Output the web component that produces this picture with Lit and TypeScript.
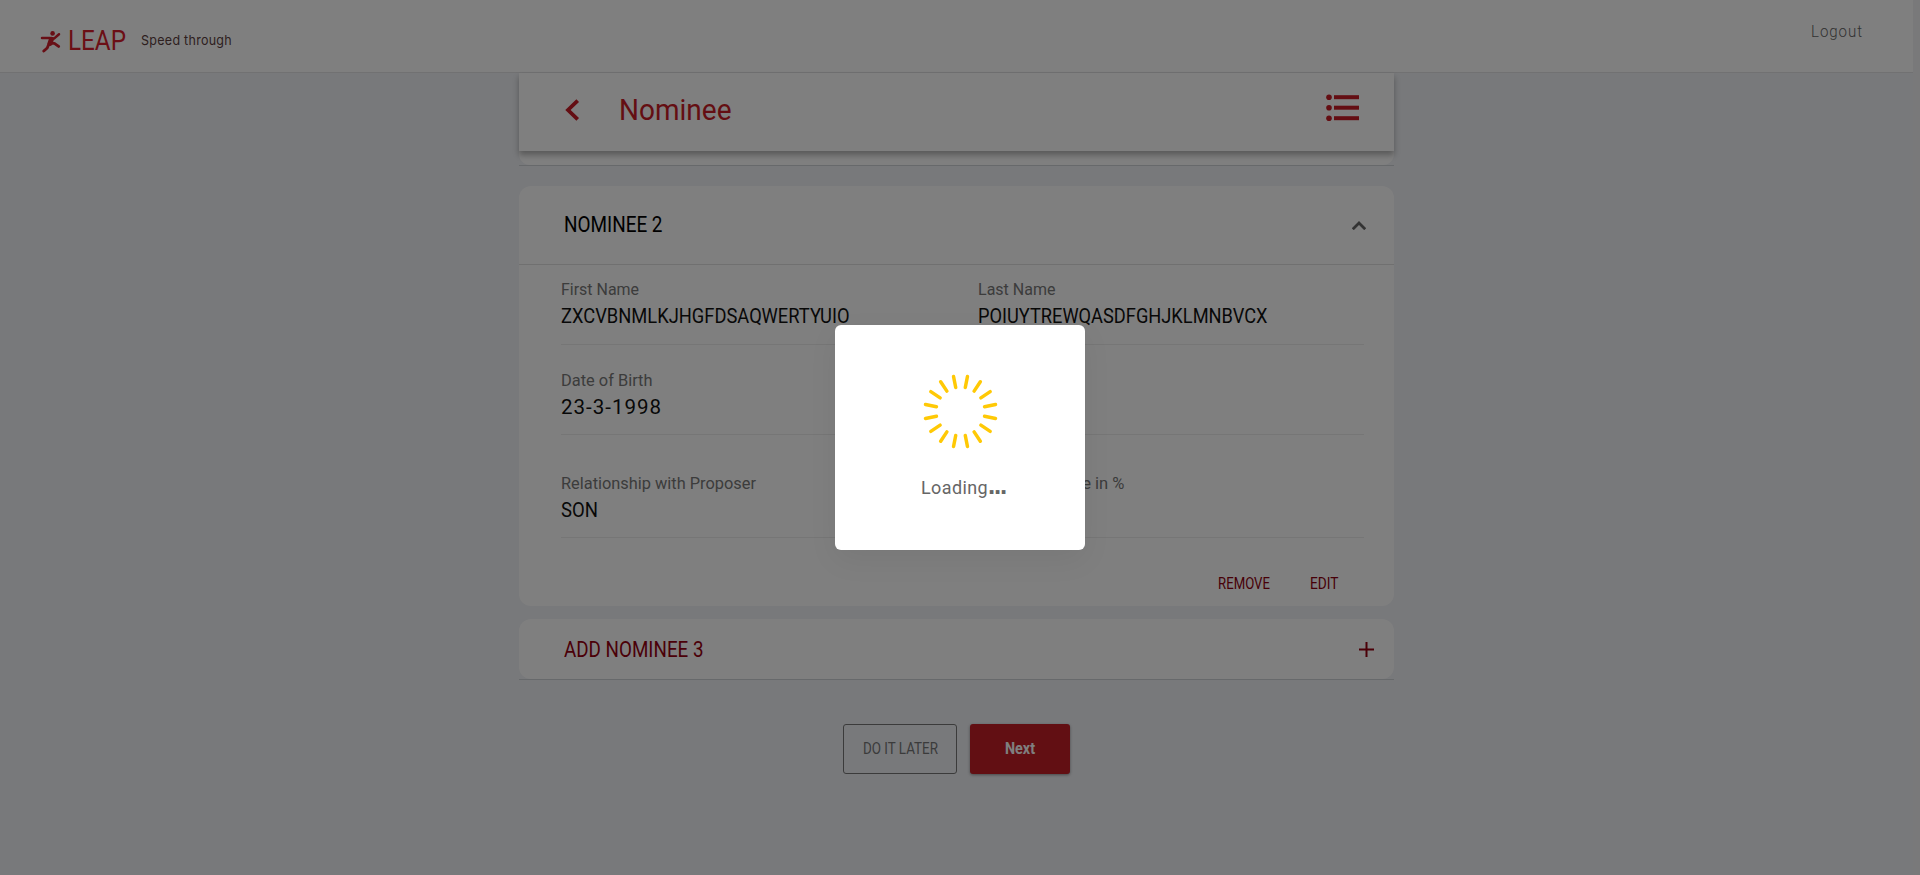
import { LitElement, html, css, svg } from "lit";
import { customElement, property } from "lit/decorators.js";

/** A line of text condensed or widened to a set width. */
@customElement("fit-text")
class FitText extends LitElement {
  @property() text = "";
  @property({ type: Number }) width = 0;

  static styles = css`
    :host { display: block; white-space: pre; text-align: left; flex: none; }
    .box { display: block; overflow: visible; }
    .ink { display: inline-block; transform-origin: 0 50%; }
  `;

  updated() {
    const ink = this.renderRoot.querySelector(".ink") as HTMLElement;
    ink.style.transform = "none";
    const natural = ink.getBoundingClientRect().width;
    if (natural) ink.style.transform = `scaleX(${this.width / natural})`;
  }

  render() {
    return html`<span class="box" style="width:${this.width}px"><span class="ink">${this.text}</span></span>`;
  }
}

const fit = (text: string, width: number, cls = "") =>
  html`<fit-text class=${cls} .text=${text} .width=${width}></fit-text>`;

@customElement("app-root")
class AppRoot extends LitElement {
  static styles = css`
    :host {
      display: block;
      height: 875px;
      overflow: hidden;
      position: relative;
      background: #f4f4f4;
      font-family: Roboto, "Liberation Sans", sans-serif;
      color: #000;
    }
    * { box-sizing: border-box; }
    svg { display: block; flex: none; }
    .page { width: 1920px; padding-right: 7px; height: 875px; background: linear-gradient(90deg, #f0f2f6 1913px, #f2f3f5 1913px); }
    .topbar {
      height: 73px; background: #fff; border-bottom: 1px solid #e2e2e4;
      display: flex; justify-content: space-between; padding: 0 50px 0 40px;
    }
    .brand { display: flex; align-items: center; height: 81px; }
    .leap { font-size: 28.5px; line-height: 34px; color: #d81f2c; margin: 0 15px 0 6.5px; }
    .tag { font: 13.6px/20px Inter, sans-serif; letter-spacing: .3px; color: #5c3f3f; margin-bottom: 2px; }
    .logout { font: 300 15.8px/20px Roboto, sans-serif; letter-spacing: 1px; color: #666; margin-top: 22px; }
    .column { width: 875px; margin: 0 auto; }
    .title {
      height: 78px; background: #fff; padding: 0 35px 6px 46px; position: relative; z-index: 1;
      display: flex; align-items: center;
      box-shadow: 0 4px 6px rgba(0, 0, 0, .3);
    }
    .back { margin-top: 2px; }
    .heading { font-size: 30px; line-height: 36px; color: #c91d26; margin: 2px 0 0 38.5px; }
    .title .list { margin-left: auto; margin-bottom: 2px; }
    .tail { height: 15px; border-bottom: 1px solid #cfd2d6; }
    .tail div { height: 14px; background: #fff; border-radius: 0 0 11px 11px; }
    .card { margin-top: 20px; height: 420px; background: #fff; border-radius: 12px; }
    .card-head {
      height: 79px; border-bottom: 1px solid #e0e0e0; padding: 0 28px 0 45px;
      display: flex; align-items: center; justify-content: space-between;
    }
    .h { font-size: 21.3px; line-height: 26px; }
    .fields { padding: 0 30px 0 42px; }
    .row { display: flex; border-bottom: 1px solid #ececec; }
    .row.a { height: 80px; padding-top: 14px; }
    .row.b { height: 90px; padding-top: 25px; }
    .row.c { height: 103px; padding-top: 38px; }
    .cell { flex: none; width: 417px; }
    .cell + .cell { width: 385px; }
    .label { font-size: 16.2px; line-height: 22px; color: #787878; margin-bottom: 2px; }
    .value { font-size: 20.8px; line-height: 26px; color: #111; }
    .spaced { letter-spacing: 1px; }
    .actions { display: flex; justify-content: flex-end; gap: 40px; padding: 36px 56px 0 0; }
    .action { font-size: 15.8px; line-height: 20px; color: #8f0010; }
    .add {
      margin-top: 13px; height: 61px; border-bottom: 1px solid #cfd2d6;
    }
    .add-in {
      height: 60px; background: #fff; border-radius: 12px; padding: 0 20px 0 45px;
      display: flex; align-items: center; justify-content: space-between;
    }
    .add .h { color: #960010; margin-top: 1px; }
    .buttons { margin-top: 44px; display: flex; justify-content: center; gap: 13px; }
    .btn { height: 50px; border-radius: 3px; display: flex; align-items: center; justify-content: center; padding-bottom: 1px; }
    .later { width: 114px; border: 1px solid #777; color: #777; font-size: 16px; line-height: 20px; }
    .next {
      width: 100px; background: #c41f27; color: #fff; font-size: 16px; font-weight: 700; line-height: 20px;
      box-shadow: 0 1px 3px rgba(0, 0, 0, .4);
    }
    .overlay {
      position: absolute; inset: 0; z-index: 5; background: rgba(0, 0, 0, .5);
      display: flex; align-items: center; justify-content: center;
    }
    .modal {
      width: 250px; height: 225px; background: #fff; border-radius: 6px;
      display: flex; flex-direction: column; align-items: center; padding-top: 46px;
      box-shadow: 0 10px 30px rgba(0, 0, 0, .06);
    }
    .loading { display: flex; align-items: baseline; margin: 22px 0 0 6px; color: #666; font: 18px/24px Roboto, sans-serif; }
    .word { letter-spacing: .4px; }
    .dots { font: 700 26px/24px "Liberation Sans", sans-serif; letter-spacing: -1.2px; }
  `;

  private spinner() {
    const spokes = Array.from({ length: 16 }, (_, i) => 11.25 + i * 22.5);
    return svg`<svg width="80" height="80" viewBox="-40.5 -40.5 80 80" stroke="#ffc905" stroke-width="3.5" stroke-linecap="round">
      ${spokes.map((a) => svg`<line x1="0" y1="-24.5" x2="0" y2="-35.7" transform="rotate(${a})"></line>`)}
    </svg>`;
  }

  private cell(label: string, lw: number, value = "", vw = 0, cls = "") {
    return html`<div class="cell">
      ${fit(label, lw, "label")}${value ? fit(value, vw, "value " + cls) : ""}
    </div>`;
  }

  render() {
    return html`
      <div class="page">
        <header class="topbar">
          <div class="brand">
            <svg width="21" height="24" viewBox="0 0 21 24" fill="none" stroke="#d01f2c" stroke-linecap="round" stroke-linejoin="round">
              <circle cx="12.6" cy="4.4" r="2.3" fill="#d01f2c" stroke="none"></circle>
              <path d="M2 8.9H9.5L14 9.6L19 5.2" stroke-width="2.5"></path>
              <path d="M11.4 10.4L10 14.4" stroke-width="5"></path>
              <path d="M9 14.8L7.2 19L3.8 22M10 14.4H14.4L18.6 17.4" stroke-width="2.9"></path>
            </svg>
            ${fit("LEAP", 58, "leap")} ${fit("Speed through", 91, "tag")}
          </div>
          ${fit("Logout", 52, "logout")}
        </header>
        <main class="column">
          <div class="title">
            <svg class="back" width="15" height="22" viewBox="0 0 15 22" fill="none" stroke="#c91d26" stroke-width="3.8">
              <path d="M12.7 1.6L3 11L12.7 20.4"></path>
            </svg>
            ${fit("Nominee", 112.5, "heading")}
            <svg class="list" width="33" height="28" viewBox="0 0 33 28" fill="#c91d26">
              ${[3.2, 13.7, 24.2].map((y) => svg`<circle cx="3" cy=${y} r="2.8"></circle><rect x="8" y=${y - 2} width="25" height="4"></rect>`)}
            </svg>
          </div>
          <div class="tail"><div></div></div>
          <section class="card">
            <div class="card-head">
              ${fit("NOMINEE 2", 98.5, "h")}
              <svg width="14" height="9" viewBox="0 0 14 9" fill="none" stroke="#666" stroke-width="2.8">
                <path d="M.8 8.2L7 2L13.2 8.2"></path>
              </svg>
            </div>
            <div class="fields">
              <div class="row a">
                ${this.cell("First Name", 78, "ZXCVBNMLKJHGFDSAQWERTYUIO", 288.5)}
                ${this.cell("Last Name", 77.5, "POIUYTREWQASDFGHJKLMNBVCX", 289.5)}
              </div>
              <div class="row b">${this.cell("Date of Birth", 91.5, "23-3-1998", 101, "spaced")}</div>
              <div class="row c">
                ${this.cell("Relationship with Proposer", 195, "SON", 37)}
                ${this.cell("Nominee Share in %", 146.5)}
              </div>
            </div>
            <div class="actions">${fit("REMOVE", 52, "action")}${fit("EDIT", 28.5, "action")}</div>
          </section>
          <section class="add">
            <div class="add-in">
              ${fit("ADD NOMINEE 3", 139.5, "h")}
              <svg width="15" height="15" viewBox="0 0 15 15" stroke="#960010" stroke-width="2"><path d="M7.5 0V15M0 7.5H15"></path></svg>
            </div>
          </section>
          <div class="buttons">
            <div class="btn later">${fit("DO IT LATER", 75)}</div>
            <div class="btn next">${fit("Next", 30)}</div>
          </div>
        </main>
      </div>
      <div class="overlay">
        <div class="modal">
          ${this.spinner()}
          <div class="loading">${fit("Loading", 67, "word")}${fit("...", 18, "dots")}</div>
        </div>
      </div>
    `;
  }
}
